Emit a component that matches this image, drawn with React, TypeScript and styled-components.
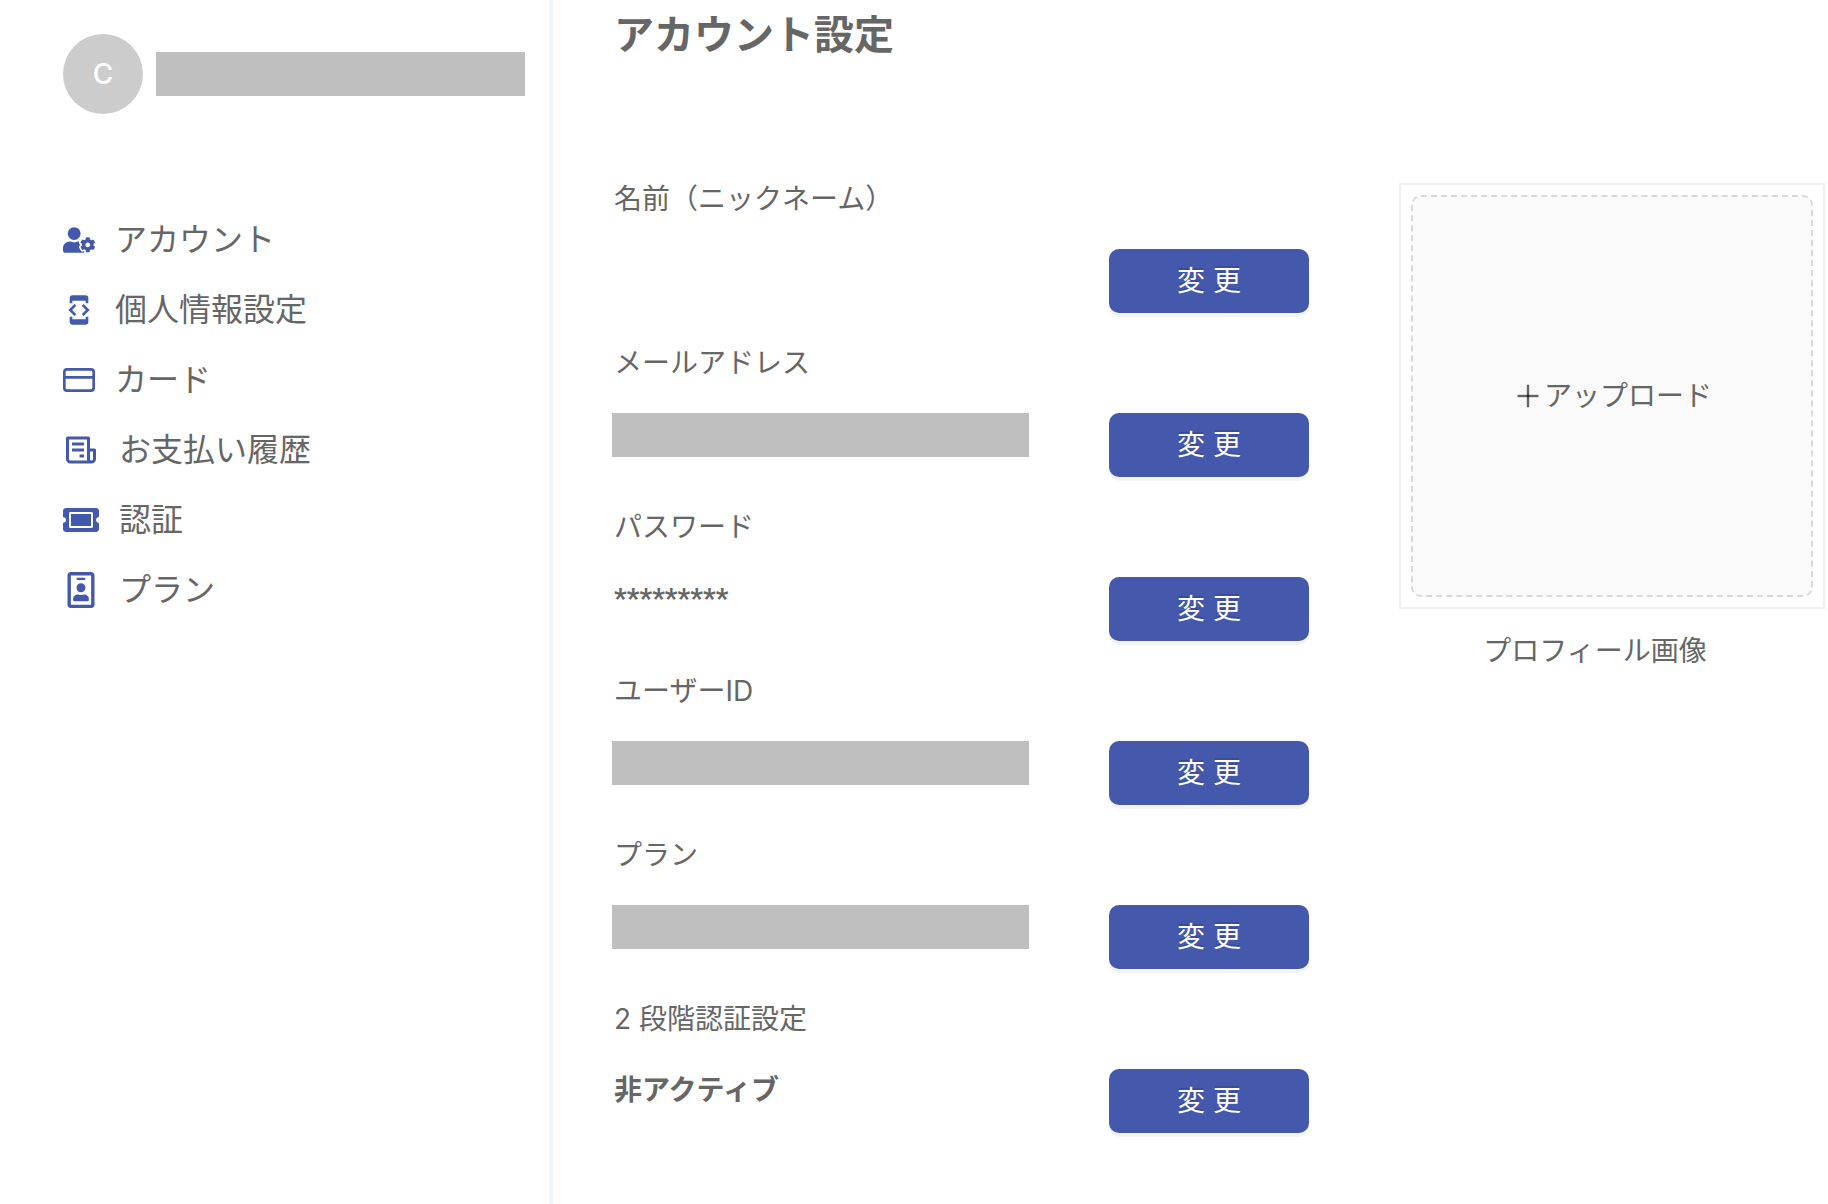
import React from 'react';
import styled, { createGlobalStyle } from 'styled-components';
import type { IconType } from 'react-icons';
import { FaRegIdBadge, FaTicketAlt, FaUserCog } from 'react-icons/fa';
import { MdDeveloperMode } from 'react-icons/md';
import { FiCreditCard } from 'react-icons/fi';
import { BiReceipt } from 'react-icons/bi';

const color = {
  primary: '#4459ab',
  text: '#666666',
  masked: '#bfbfbf',
  divider: '#f0f4ff',
};

const GlobalStyle = createGlobalStyle`
  *, *::before, *::after { box-sizing: border-box; }
  body {
    margin: 0;
    background: #ffffff;
    color: ${color.text};
    font-family: Inter, 'Noto Sans CJK JP', sans-serif;
    font-size: 28px;
    line-height: 44px;
  }
`;

const Page = styled.div`
  display: flex;
  min-height: 100vh;
`;

const Sidebar = styled.aside`
  flex: 0 0 553px;
  display: flex;
  flex-direction: column;
  gap: 91px;
  padding: 34px 24px 34px 63px;
  border-right: 4px solid ${color.divider};
`;

const Profile = styled.div`
  display: flex;
  align-items: center;
  gap: 13px;
`;

const Avatar = styled.div`
  flex: none;
  display: flex;
  align-items: center;
  justify-content: center;
  width: 80px;
  height: 80px;
  border-radius: 50%;
  background: #cccccc;
  color: #ffffff;
  font-weight: 500;
`;

const Masked = styled.div`
  flex: 1;
  height: 44px;
  background: ${color.masked};
`;

const NavList = styled.ul`
  display: flex;
  flex-direction: column;
  margin: 0;
  padding: 0;
  list-style: none;
`;

const NavLink = styled.a<{ $iconSize: number }>`
  display: flex;
  align-items: center;
  gap: 20px;
  height: 70px;
  color: ${color.text};
  font-size: 32px;
  text-decoration: none;

  svg {
    flex: none;
    width: ${(p) => p.$iconSize}px;
    height: ${(p) => p.$iconSize}px;
    color: ${color.primary};
  }
`;

const Main = styled.main`
  flex: 1;
  min-width: 0;
  padding: 0 3px 40px 59px;
`;

const Title = styled.h1`
  margin: 0 0 107px;
  padding-left: 2px;
  font-size: 40px;
  font-weight: 700;
  line-height: 70px;
`;

const Content = styled.div`
  display: grid;
  grid-template-columns: minmax(0, 1fr) 426px;
  gap: 90px;
  align-items: start;
`;

const Fields = styled.div`
  display: flex;
  flex-direction: column;
  gap: 28px;
`;

const Field = styled.section`
  display: grid;
  grid-template-columns: minmax(0, 1fr) 200px;
  column-gap: 80px;
  row-gap: 28px;
  align-items: start;
`;

const FieldLabel = styled.h2`
  grid-column: 1 / -1;
  margin: 0;
  padding-left: 2px;
  font-size: 28px;
  font-weight: 400;
`;

const FieldValue = styled.div`
  min-height: 44px;
  padding-left: 2px;
  font-family: Roboto, 'Noto Sans CJK JP', sans-serif;
  font-weight: 700;
`;

const ChangeButton = styled.button`
  height: 64px;
  padding: 0;
  border: 0;
  border-radius: 10px;
  background: ${color.primary};
  box-shadow: 0 4px 0 rgba(0, 0, 0, 0.043);
  color: #ffffff;
  font: inherit;
  text-shadow: 0 -2px 0 rgba(0, 0, 0, 0.12);
  cursor: pointer;
`;

const Picture = styled.figure`
  margin: 6px 0 0;
`;

const UploadFrame = styled.div`
  height: 426px;
  padding: 10px;
  border: 2px solid #f0f0f0;
`;

const UploadButton = styled.button`
  display: flex;
  align-items: center;
  justify-content: center;
  width: 100%;
  height: 100%;
  padding: 0;
  border: 2px dashed #d9d9d9;
  border-radius: 10px;
  background: #fafafa;
  color: ${color.text};
  font: inherit;
  cursor: pointer;
`;

const Caption = styled.figcaption`
  margin-top: 20px;
  padding-right: 34px;
  text-align: center;
`;

const PlusIcon = () => (
  <svg width="32" height="32" viewBox="0 0 1024 1024" fill="#000000" fillOpacity="0.6" aria-hidden="true">
    <path d="M474 152h76v720h-76z" />
    <path d="M176 474h672v76H176z" />
  </svg>
);

const navItems: { label: string; icon: IconType; size: number }[] = [
  { label: 'アカウント', icon: FaUserCog, size: 32 },
  { label: '個人情報設定', icon: MdDeveloperMode, size: 32 },
  { label: 'カード', icon: FiCreditCard, size: 32 },
  { label: 'お支払い履歴', icon: BiReceipt, size: 36 },
  { label: '認証', icon: FaTicketAlt, size: 36 },
  { label: 'プラン', icon: FaRegIdBadge, size: 36 },
];

const fields: { label: string; value?: string; masked?: boolean }[] = [
  { label: '名前（ニックネーム）' },
  { label: 'メールアドレス', masked: true },
  { label: 'パスワード', value: '*********' },
  { label: 'ユーザーID', masked: true },
  { label: 'プラン', masked: true },
  { label: '2 段階認証設定', value: '非アクティブ' },
];

export default function App() {
  return (
    <Page lang="ja">
      <GlobalStyle />
      <Sidebar>
        <Profile>
          <Avatar>C</Avatar>
          <Masked />
        </Profile>
        <nav>
          <NavList>
            {navItems.map(({ label, icon: Icon, size }) => (
              <li key={label}>
                <NavLink href="#" $iconSize={size}>
                  <Icon aria-hidden="true" />
                  {label}
                </NavLink>
              </li>
            ))}
          </NavList>
        </nav>
      </Sidebar>
      <Main>
        <Title>アカウント設定</Title>
        <Content>
          <Fields>
            {fields.map(({ label, value, masked }) => (
              <Field key={label}>
                <FieldLabel>{label}</FieldLabel>
                {masked ? <Masked /> : <FieldValue>{value}</FieldValue>}
                <ChangeButton type="button">変 更</ChangeButton>
              </Field>
            ))}
          </Fields>
          <Picture>
            <UploadFrame>
              <UploadButton type="button">
                <PlusIcon />
                アップロード
              </UploadButton>
            </UploadFrame>
            <Caption>プロフィール画像</Caption>
          </Picture>
        </Content>
      </Main>
    </Page>
  );
}
